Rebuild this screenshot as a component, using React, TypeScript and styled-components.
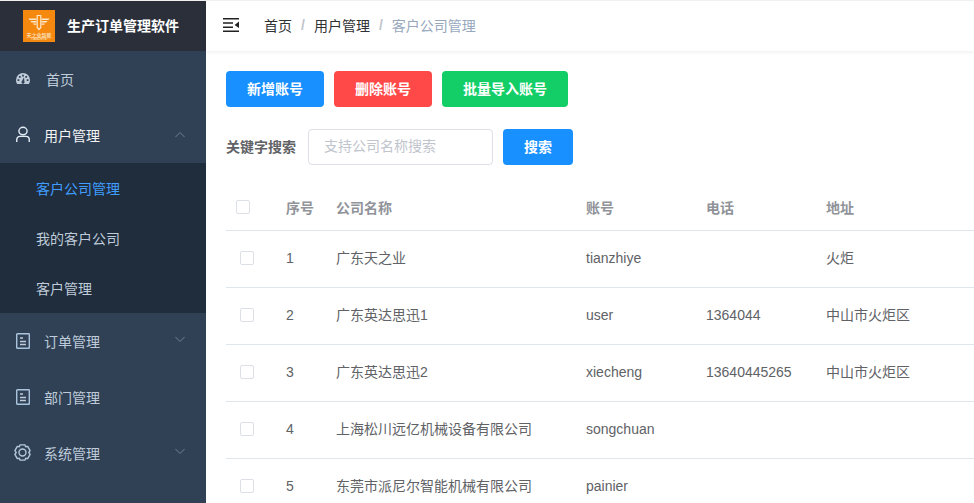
import React from "react";
import styled, { createGlobalStyle } from "styled-components";

const Global = createGlobalStyle`
  html, body { margin: 0; padding: 0; height: 100%; overflow: hidden; background: #fff; }
  #root { height: 100%; }
  * { box-sizing: border-box; }
  body { font-family: "Liberation Sans", "Noto Sans CJK SC", sans-serif; font-size: 14px; }
`;

const Page = styled.div`
  display: flex;
  width: 974px;
  height: 503px;
  overflow: hidden;
  border-top: 1px solid #f0f0f0;
`;
const Sidebar = styled.aside`
  flex: 0 0 206px;
  background: #304156;
  display: flex;
  flex-direction: column;
`;
const Brand = styled.div`
  height: 50px;
  flex: 0 0 50px;
  background: #2b2f3a;
  display: flex;
  align-items: center;
  padding: 0 0 1px 23px;
  gap: 12px;
  color: #fff;
  font-weight: 700;
  font-size: 14px;
`;
const BrandName = styled.span`
  padding-bottom: 2px;
`;
const MenuRow = styled.div`
  height: 56px;
  flex: 0 0 56px;
  display: flex;
  align-items: center;
  padding: 0 0 1px 16px;
  position: relative;
  color: ${(p: { $active?: boolean }) => (p.$active ? "#f4f4f5" : "#bfcbd9")};
`;
const IconSlot = styled.span`
  width: 14px;
  height: 16px;
  margin-right: 14px;
  display: flex;
  align-items: center;
  justify-content: center;
  flex: 0 0 14px;
`;
const HomeLabel = styled.span`
  margin-left: 2px;
`;
const Caret = styled.svg<{ $up?: boolean }>`
  position: absolute;
  left: 175px;
  top: ${(p) => (p.$up ? "24px" : "22px")};
`;
const SubMenu = styled.div`
  background: #1f2d3d;
  flex: 0 0 auto;
`;
const SubItem = styled.div`
  height: 50px;
  display: flex;
  align-items: center;
  padding-left: 36px;
  color: ${(p: { $active?: boolean }) => (p.$active ? "#409eff" : "#bfcbd9")};
`;
const Main = styled.main`
  flex: 1;
  min-width: 0;
  display: flex;
  flex-direction: column;
`;
const Navbar = styled.header`
  height: 50px;
  flex: 0 0 50px;
  background: #fff;
  box-shadow: 0 1px 4px rgba(0, 21, 41, 0.08);
  display: flex;
  align-items: center;
  padding: 0 0 2px 17px;
`;
const Crumbs = styled.nav`
  margin-left: 25px;
  display: flex;
  align-items: center;
  color: #303133;
`;
const Sep = styled.span`
  margin: 0 9px;
  color: #c0c4cc;
  font-weight: 700;
`;
const Current = styled.span`
  color: #97a8be;
`;
const Content = styled.section`
  padding: 20px 0 0 20px;
  flex: 1;
  min-height: 0;
`;
const Toolbar = styled.div`
  display: flex;
  gap: 10px;
`;
const Button = styled.button<{ $bg: string; $w: number }>`
  width: ${(p) => p.$w}px;
  height: 36px;
  border: 0;
  border-radius: 4px;
  background: ${(p) => p.$bg};
  color: #fff;
  font: 700 14px "Liberation Sans", "Noto Sans CJK SC", sans-serif;
  padding: 0 0 2px;
`;
const SearchRow = styled.div`
  display: flex;
  align-items: center;
  margin-top: 22px;
`;
const SearchLabel = styled.label`
  color: #606266;
  font-weight: 700;
  width: 82px;
  padding-bottom: 2px;
`;
const SearchInput = styled.input`
  width: 185px;
  height: 36px;
  border: 1px solid #dcdfe6;
  border-radius: 4px;
  padding: 0 15px 2px;
  margin-right: 10px;
  font: 14px "Liberation Sans", "Noto Sans CJK SC", sans-serif;
  &::placeholder { color: #c0c4cc; opacity: 1; }
`;
const Table = styled.div`
  margin-top: 21px;
  width: 800px;
`;
const Row = styled.div<{ $head?: boolean }>`
  display: grid;
  grid-template-columns: 60px 50px 250px 120px 120px 1fr;
  align-items: center;
  height: ${(p) => (p.$head ? "45px" : "57px")};
  padding-bottom: 2px;
  border-bottom: 1px solid #dfe6ec;
  color: ${(p) => (p.$head ? "#909399" : "#606266")};
  font-weight: ${(p) => (p.$head ? 700 : 400)};
`;
const Cell = styled.span<{ $cjk?: boolean }>`
  padding-bottom: ${(p) => (p.$cjk ? "2px" : "0")};
`;
const Box = styled.span<{ $head?: boolean }>`
  display: block;
  width: 14px;
  height: 14px;
  border: 1px solid #dcdfe6;
  border-radius: 2px;
  background: #fff;
  margin-left: ${(p) => (p.$head ? "10px" : "14px")};
`;

const ChevronIcon = ({ up }: { up?: boolean }) => (
  <Caret $up={up} width="10" height="8" viewBox="0 0 10 8" fill="none" stroke="#6f7f92" strokeWidth="1">
    <path d={up ? "M0.5 6L5 1.5L9.5 6" : "M0.5 2L5 6.5L9.5 2"} />
  </Caret>
);

const DocIcon = () => (
  <svg width="14" height="16" viewBox="0 0 14 16" fill="none" stroke="#a9c4dc" strokeWidth="1.4">
    <rect x="0.7" y="0.7" width="12.6" height="14.6" rx="0.6" />
    <path stroke="#bfcbd9" d="M4 5h3M4 8.5h6M4 11.5h6" />
  </svg>
);
const UserIcon = () => (
  <svg width="15" height="17" viewBox="0 0 15 17" fill="none" stroke="#e4edf5" strokeWidth="1.5">
    <ellipse cx="7.5" cy="4.8" rx="4.4" ry="4" />
    <path d="M0.8 16.5V14a3.5 3.5 0 0 1 3.5-3.5h6.4a3.5 3.5 0 0 1 3.5 3.5v2.5" />
  </svg>
);
const DashIcon = () => (
  <svg width="14" height="11" viewBox="0 0 14 11">
    <path
      fill="#bfcbd9"
      fillRule="evenodd"
      d="M7 0A7 7 0 0 1 14 7C14 8.6 13.5 9.9 12.8 11H1.2C0.5 9.9 0 8.6 0 7A7 7 0 0 1 7 0ZM6.1 1.7h1.8v1.8H6.1ZM2.9 3h1.8v1.8H2.9ZM9.3 3h1.8v1.8H9.3ZM1.5 6.2h1.8V8H1.5ZM10.7 6.2h1.8V8h-1.8ZM8 4.2L5.9 8.2A1.5 1.5 0 1 0 8.4 8.6Z"
    />
  </svg>
);
const GearSvg = styled.svg`
  margin-left: -1px;
  flex: none;
`;
const GearIcon = () => (
  <GearSvg width="17" height="17" viewBox="0 0 17 17" fill="none" stroke="#b4c8dc" strokeWidth="1.4">
    <path
      d="M6 .9h5l.7 1.8 2-.3 2.4 4.2-1.3 1.9 1.3 1.9-2.4 4.2-2-.3-.7 1.8H6l-.7-1.8-2 .3L.9 10.4l1.3-1.9L.9 6.6l2.4-4.2 2 .3Z"
      strokeLinejoin="round"
    />
    <circle cx="8.5" cy="8.5" r="3.5" />
  </GearSvg>
);
const HamburgerIcon = () => (
  <svg width="16" height="14" viewBox="0 0 16 14">
    <path fill="#222" d="M0 0h16v1.5H0zM0 4.2h10v1.5H0zM0 8.4h10v1.5H0zM0 12.5h16V14H0z" />
    <path fill="#222" d="M16 3.5v6.6L11.6 7Z" />
  </svg>
);
const Logo = () => (
  <svg width="32" height="32" viewBox="0 0 32 32">
    <rect width="32" height="32" fill="#f5890f" />
    <path
      fill="#fde8cc"
      d="M5.5 8.5h8v1.6h-7ZM26.5 8.5h-8v1.6h7ZM7.5 11h6v1.4h-5ZM24.5 11h-6v1.4h5ZM10 13.5h3.5v1.3h-2.6ZM22 13.5h-3.5v1.3h2.6Z"
    />
    <path fill="none" stroke="#fde8cc" strokeWidth="1.2" d="M14.2 5.5h3.6v12l-1.8 2-1.8-2Z" />
    <text x="16" y="26.5" textAnchor="middle" fontSize="5" fill="#fbdcb2" fontFamily="'Noto Sans CJK SC', sans-serif">天之业新能</text>
    <text x="16" y="29.6" textAnchor="middle" fontSize="3" fill="#fbd9a8" fontFamily="'Liberation Sans', sans-serif">TIANZHIYE</text>
  </svg>
);

const rows = [
  ["1", "广东天之业", "tianzhiye", "", "火炬"],
  ["2", "广东英达思迅1", "user", "1364044", "中山市火炬区"],
  ["3", "广东英达思迅2", "xiecheng", "13640445265", "中山市火炬区"],
  ["4", "上海松川远亿机械设备有限公司", "songchuan", "", ""],
  ["5", "东莞市派尼尔智能机械有限公司", "painier", "", ""],
];

export default function App() {
  return (
    <Page>
      <Global />
      <Sidebar>
        <Brand>
          <Logo />
          <BrandName>生产订单管理软件</BrandName>
        </Brand>
        <MenuRow>
          <IconSlot><DashIcon /></IconSlot>
          <HomeLabel>首页</HomeLabel>
        </MenuRow>
        <MenuRow $active>
          <IconSlot><UserIcon /></IconSlot>
          <span>用户管理</span>
          <ChevronIcon up />
        </MenuRow>
        <SubMenu>
          <SubItem $active>客户公司管理</SubItem>
          <SubItem>我的客户公司</SubItem>
          <SubItem>客户管理</SubItem>
        </SubMenu>
        <MenuRow>
          <IconSlot><DocIcon /></IconSlot>
          <span>订单管理</span>
          <ChevronIcon />
        </MenuRow>
        <MenuRow>
          <IconSlot><DocIcon /></IconSlot>
          <span>部门管理</span>
        </MenuRow>
        <MenuRow>
          <IconSlot><GearIcon /></IconSlot>
          <span>系统管理</span>
          <ChevronIcon />
        </MenuRow>
      </Sidebar>
      <Main>
        <Navbar>
          <HamburgerIcon />
          <Crumbs>
            <span>首页</span>
            <Sep>/</Sep>
            <span>用户管理</span>
            <Sep>/</Sep>
            <Current>客户公司管理</Current>
          </Crumbs>
        </Navbar>
        <Content>
          <Toolbar>
            <Button $bg="#1890ff" $w={98}>新增账号</Button>
            <Button $bg="#ff4949" $w={98}>删除账号</Button>
            <Button $bg="#13ce66" $w={126}>批量导入账号</Button>
          </Toolbar>
          <SearchRow>
            <SearchLabel>关键字搜索</SearchLabel>
            <SearchInput placeholder="支持公司名称搜索" />
            <Button $bg="#1890ff" $w={70}>搜索</Button>
          </SearchRow>
          <Table>
            <Row $head>
              <span><Box $head /></span>
              <span>序号</span>
              <span>公司名称</span>
              <span>账号</span>
              <span>电话</span>
              <span>地址</span>
            </Row>
            {rows.map((r) => (
              <Row key={r[0]}>
                <span><Box /></span>
                {r.map((c, i) => <Cell key={i} $cjk={i === 1 || i === 4}>{c}</Cell>)}
              </Row>
            ))}
          </Table>
        </Content>
      </Main>
    </Page>
  );
}
